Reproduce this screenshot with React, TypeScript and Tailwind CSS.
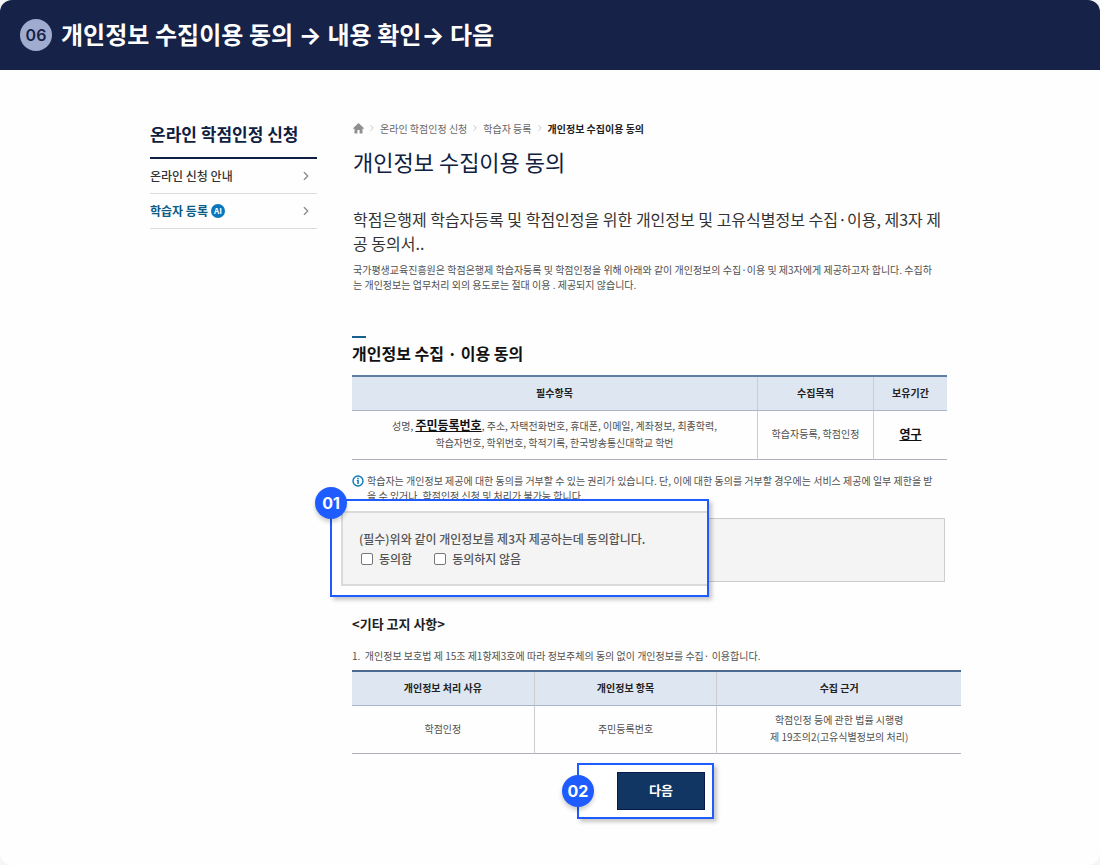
import type { ReactNode } from 'react'
import { ChevronRight } from 'lucide-react'

const thBase = 'h-[34px] border-b border-[#a9b4c6] bg-[#dee6f1] px-0 pt-0 pb-[3px] text-center font-bold text-[#222]'
const tdBase = 'border-b border-[#adb1bd] px-0 pt-0 pb-[3px] text-center'
const divider = 'border-r border-r-[#cbcdd2]'

function StepBadge({ children }: { children: ReactNode }) {
  return (
    <span className="flex size-8 -translate-x-1/2 -translate-y-1/2 items-center justify-center rounded-full bg-[#1f5cff] font-['Inter',sans-serif] text-base font-bold text-white shadow-[0_3px_4px_rgba(0,0,0,0.2)]">
      {children}
    </span>
  )
}

function HomeIcon() {
  return (
    <svg viewBox="0 0 11 11" className="size-[11px]" fill="#8f8f8f" aria-hidden="true">
      <path d="M5.5 0 L11 5.2 L10.3 6 L9.5 5.4 V10.5 H6.6 V7 H4.4 V10.5 H1.5 V5.4 L0.7 6 L0 5.2 Z" />
    </svg>
  )
}

function InfoIcon() {
  return (
    <svg viewBox="0 0 12 12" className="mt-[2px] size-3 shrink-0" aria-hidden="true">
      <circle cx="6" cy="6" r="5" fill="none" stroke="#0b78b8" strokeWidth="1.4" />
      <rect x="5.2" y="2.8" width="1.6" height="1.5" fill="#0b78b8" />
      <path d="M4.8 5h2v4h-1.5V6h-0.5z" fill="#0b78b8" />
    </svg>
  )
}

function Sidebar() {
  return (
    <aside className="w-[167px] shrink-0 pt-[52px]">
      <h2 className="border-b-2 border-[#0f2044] pb-[11px] text-[17px] leading-6 font-bold whitespace-nowrap text-[#10203f]">
        온라인 학점인정 신청
      </h2>
      <nav className="text-xs font-medium">
        <a href="#guide" className="flex h-[35px] items-center justify-between border-b border-[#dcdcdc] text-[#333]">
          온라인 신청 안내
          <ChevronRight className="mr-1 size-[14px] text-[#888]" strokeWidth={2} />
        </a>
        <a href="#register" className="flex h-[35px] items-center justify-between border-b border-[#dcdcdc] font-bold text-[#0b5a87]">
          <span className="flex items-center gap-[3px]">
            학습자 등록
            <span className="flex size-[14px] items-center justify-center rounded-full bg-[#0a76bd] text-[8px] font-bold text-white">
              AI
            </span>
          </span>
          <ChevronRight className="mr-1 size-[14px] text-[#888]" strokeWidth={2} />
        </a>
      </nav>
    </aside>
  )
}

function Breadcrumb() {
  return (
    <nav className="flex h-4 items-center gap-[3px] text-[#666]" aria-label="breadcrumb">
      <a href="#home" aria-label="홈">
        <HomeIcon />
      </a>
      <ChevronRight className="size-[10px] text-[#bbb]" strokeWidth={2} />
      <a href="#apply">온라인 학점인정 신청</a>
      <ChevronRight className="size-[10px] text-[#bbb]" strokeWidth={2} />
      <a href="#register">학습자 등록</a>
      <ChevronRight className="size-[10px] text-[#bbb]" strokeWidth={2} />
      <strong className="font-bold text-[#222]">개인정보 수집이용 동의</strong>
    </nav>
  )
}

function ConsentCallout() {
  const box = 'size-3 appearance-none rounded-[2px] border border-[#777] bg-white'
  return (
    <div className="absolute -top-5 -left-[23px] h-[98px] w-[379px] border-2 border-[#1f5cff] bg-white pt-[10px] pl-[9px] shadow-[3px_3px_4px_rgba(0,0,0,0.22)]">
      <div className="absolute top-[2px] -left-px">
        <StepBadge>01</StepBadge>
      </div>
      <fieldset className="h-[75px] border-2 border-r-0 border-[#dadada] bg-[#f4f4f4] pt-4 pl-4 text-xs leading-5 font-medium text-[#555]">
        <p>(필수)위와 같이 개인정보를 제3자 제공하는데 동의합니다.</p>
        <div className="flex gap-[22px] pl-[2px]">
          <label className="flex items-center gap-[6px]">
            <input type="checkbox" className={box} />
            동의함
          </label>
          <label className="flex items-center gap-[6px]">
            <input type="checkbox" className={box} />
            동의하지 않음
          </label>
        </div>
      </fieldset>
    </div>
  )
}

export default function App() {
  return (
    <div className="min-h-screen bg-[#f5f5f5] font-['Noto_Sans_CJK_KR','Noto_Sans',sans-serif] text-[10px] text-[#505050]">
      <div className="min-h-screen overflow-hidden rounded-xl bg-[#fefefe]">
        <header className="flex h-[70px] items-center gap-[9px] bg-[#162247] pl-5 font-['Inter','Noto_Sans_CJK_KR',sans-serif]">
          <span className="flex size-8 items-center justify-center rounded-full bg-[#a0abd0] text-base font-semibold text-[#162247]">
            06
          </span>
          <h1 className="pt-[2px] text-2xl font-bold text-white">개인정보 수집이용 동의 → 내용 확인→ 다음</h1>
        </header>

        <div className="flex gap-[35px] pr-[139px] pl-[150px]">
          <Sidebar />

          <main className="min-w-0 flex-1 pt-[50px] pb-[46px]">
            <div className="pl-px">
              <Breadcrumb />
              <h2 className="mt-[9px] text-[22px] leading-8 text-[#10203f]">개인정보 수집이용 동의</h2>

              <p className="mt-[30px] text-base leading-6 whitespace-nowrap text-[#333]">
                학점은행제 학습자등록 및 학점인정을 위한 개인정보 및 고유식별정보 수집·이용, 제3자 제
                <br />공 동의서..
              </p>
              <p className="mt-[7px] leading-[15px] whitespace-nowrap">
                국가평생교육진흥원은 학점은행제 학습자등록 및 학점인정을 위해 아래와 같이 개인정보의 수집·이용 및 제3자에게 제공하고자 합니다. 수집하
                <br />는 개인정보는 업무처리 외의 용도로는 절대 이용 . 제공되지 않습니다.
              </p>
            </div>

            <section className="mt-11 mr-[14px]">
              <div className="h-[2px] w-[14px] bg-[#175f8e]" />
              <h3 className="mt-[3px] text-base leading-6 font-bold text-[#111]">개인정보 수집 · 이용 동의</h3>
              <table className="mt-[10px] w-full table-fixed border-separate border-spacing-0 border-t-2 border-[#5f7fa0]">
                <thead>
                  <tr>
                    <th className={`${thBase} ${divider}`}>필수항목</th>
                    <th className={`${thBase} ${divider} w-[116px]`}>수집목적</th>
                    <th className={`${thBase} w-[73px]`}>보유기간</th>
                  </tr>
                </thead>
                <tbody>
                  <tr>
                    <td className={`${tdBase} ${divider} h-[49px] leading-[17px]`}>
                      성명, <strong className="text-xs leading-[17px] font-bold text-[#111] underline">주민등록번호</strong>, 주소, 자택전화번호, 휴대폰, 이메일, 계좌정보, 최종학력,
                      <br />
                      학습자번호, 학위번호, 학적기록, 한국방송통신대학교 학번
                    </td>
                    <td className={`${tdBase} ${divider}`}>학습자등록, 학점인정</td>
                    <td className={tdBase}>
                      <strong className="text-xs font-bold text-[#111] underline">영구</strong>
                    </td>
                  </tr>
                </tbody>
              </table>

              <div className="mt-[13px] flex gap-[3px] leading-[15px] whitespace-nowrap">
                <InfoIcon />
                <p>
                  학습자는 개인정보 제공에 대한 동의를 거부할 수 있는 권리가 있습니다. 단, 이에 대한 동의를 거부할 경우에는 서비스 제공에 일부 제한을 받
                  <br />을 수 있거나, 학점인정 신청 및 처리가 불가능 합니다.
                </p>
              </div>

              <div className="relative mt-[15px] mr-[2px] h-16 border border-[#ccc] bg-[#f4f4f4]">
                <ConsentCallout />
              </div>
            </section>

            <section className="mt-8">
              <h3 className="text-[13px] leading-5 font-bold text-[#222]">&lt;기타 고지 사항&gt;</h3>
              <p className="mt-[14px] leading-4">1. &nbsp;개인정보 보호법 제 15조 제1항제3호에 따라 정보주체의 동의 없이 개인정보를 수집· 이용합니다.</p>
              <table className="mt-[6px] w-full table-fixed border-separate border-spacing-0 border-t-2 border-[#4a6a94]">
                <thead>
                  <tr>
                    <th className={`${thBase} ${divider} w-[30%]`}>개인정보 처리 사유</th>
                    <th className={`${thBase} ${divider} w-[30%]`}>개인정보 항목</th>
                    <th className={thBase}>수집 근거</th>
                  </tr>
                </thead>
                <tbody>
                  <tr>
                    <td className={`${tdBase} ${divider} h-12`}>학점인정</td>
                    <td className={`${tdBase} ${divider}`}>주민등록번호</td>
                    <td className={`${tdBase} leading-[17px]`}>
                      학점인정 등에 관한 법률 시행령
                      <br />제 19조의2(고유식별정보의 처리)
                    </td>
                  </tr>
                </tbody>
              </table>
            </section>

            <div className="mt-[9px] flex justify-center pr-[22px]">
              <div className="relative flex h-14 w-[137px] items-center justify-end border-2 border-[#1f5cff] bg-white pr-[7px] shadow-[3px_3px_4px_rgba(0,0,0,0.22)]">
                <div className="absolute top-1/2 -left-px">
                  <StepBadge>02</StepBadge>
                </div>
                <button type="button" className="h-[38px] w-[88px] border border-[#06194a] bg-[#123663] pb-[3px] text-[13px] font-bold text-white">
                  다음
                </button>
              </div>
            </div>
          </main>
        </div>
      </div>
    </div>
  )
}
